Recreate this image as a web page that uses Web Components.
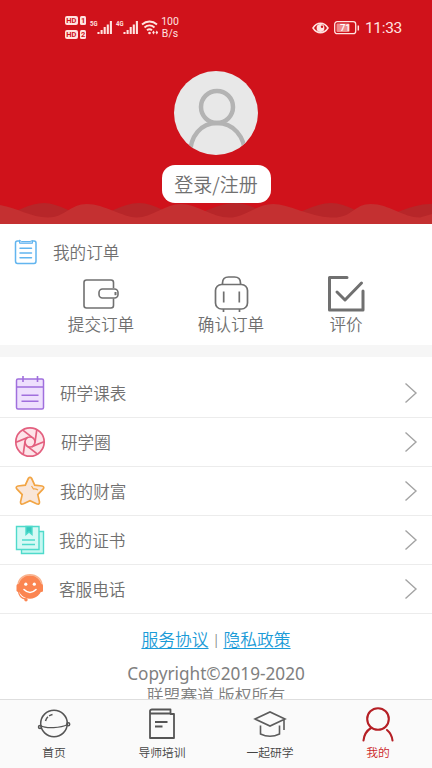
<!DOCTYPE html>
<html lang="zh-CN">
<head>
<meta charset="utf-8">
<title>我的</title>
<style>
html,body{margin:0;height:100%;overflow:hidden;background:#fff}
body{font-family:Roboto,"Noto Sans CJK SC",sans-serif;color:#707070}
</style>
</head>
<body>
<profile-page></profile-page>
<script>
const ICONS = {
  signals: [116,26,`<g fill="#ffe3e0"><rect x="0" y="1" width="13" height="9" rx="2"/><rect x="15" y="1" width="6" height="9" rx="1.5"/><rect x="0" y="15" width="13" height="9" rx="2"/><rect x="15" y="15" width="6" height="9" rx="1.5"/></g>
   <g font-family="Roboto" font-weight="700" font-size="7.5" fill="#d0121b"><text x="1.3" y="8.2">HD</text><text x="1.3" y="22.2">HD</text><text x="16" y="8.2">1</text><text x="16" y="22.2">2</text></g>
   <g font-family="Roboto" font-weight="700" font-size="8" fill="#ffe3e0"><text x="25" y="10.5" textLength="7.5" lengthAdjust="spacingAndGlyphs">5G</text><text x="51" y="10.5" textLength="7.5" lengthAdjust="spacingAndGlyphs">4G</text></g>
   <path d="M33.5 19v-2M36.6 19v-4M39.7 19v-7M42.8 19v-9.500M45.900 19v-13M59.500 19v-2M62.600 19v-4M65.700 19v-7M68.800 19v-9.500M71.900 19v-13" stroke="#ffe3e0" stroke-width="2.100"/>
   <g fill="none" stroke="#ffe3e0" stroke-width="1.900"><path d="M77 9.500c4.500-4 10.500-4 15 0M79.500 12.500c3-2.700 7-2.700 10 0M82 15.300c1.500-1.300 3.500-1.300 5 0"/></g><circle cx="84.500" cy="18" r="1.300" fill="#ffe3e0"/><path d="M87.200 17.500l1.300-2 1.300 2-1.300 2zM90.500 17.500l1.300-2 1.300 2-1.300 2z" fill="#ffe3e0"/>`],
  eye: [17,12,`<path d="M1 6c4-6.300 11-6.300 15 0c-4 6.300-11 6.300-15 0z" fill="none" stroke="#ffe3e0" stroke-width="1.500"/><circle cx="8.500" cy="6" r="3.900" fill="#ffe3e0"/><circle cx="10" cy="4.700" r="1.200" fill="#d0121b"/>`],
  battery: [26,14,`<rect x=".700" y=".700" width="21" height="12" rx="2.500" fill="none" stroke="#ffe3e0" stroke-width="1.300"/><rect x="2.500" y="2.500" width="13" height="8.500" rx="1" fill="#ee8c8c"/><path d="M24.300 4.500v5" stroke="#ffe3e0" stroke-width="1.500"/><text x="11.300" y="10.200" text-anchor="middle" font-family="Roboto" font-size="9.500" font-weight="500" fill="#fff">71</text>`],
  avatar: [84,84,`<defs><clipPath id="c"><circle cx="42" cy="42" r="42"/></clipPath></defs><circle cx="42" cy="42" r="42" fill="#e8e8e8"/><g clip-path="url(#c)" fill="none" stroke="#b3b3b3" stroke-width="4.500"><circle cx="43" cy="36" r="16"/><path d="M16 84C16 65 27 52 43 52S71 65 71 84"/></g>`],
  wave: [432,22,`<path d="M0 14C18 10 29 1 44 1S75 14 91 14 122 1 139 1 168 14 184 14 217 1 235 1 264 14 281 14 314 1 331 1 360 14 378 14 411 1 432 2V22H0Z" fill="#b72629"/>
   <path d="M0 3C18 6 31 15.500 48 15.500S70 2 87 2 123 15.500 137 15.500 166 2 181 2 213 15.500 229 15.500 257 2 273 2 309 14.500 331 15.500 353 2 371 2 403 15.500 420 15.500L432 12V22H0Z" fill="#c43031"/>`],
  list: [24,26,`<g fill="none" stroke="#62b5ef" stroke-width="1.500" stroke-linecap="round" stroke-linejoin="round"><path d="M5 2H3.500Q1.500 2 1.500 4V22Q1.500 24.500 3.500 24.500H20Q22 24.500 22 22V4Q22 2 20 2H18.500"/><path d="M5.500 1.500V4.300H18.500V1.500L16 2.500H8Z" fill="#b9dcfa" stroke-width="1"/><path d="M6 9.200H17.500M6 14H17.500M6 18.700H17.500"/></g>`],
  wallet: [38,32,`<g fill="none" stroke="#707070" stroke-width="1.600"><path d="M31.500 10V4.500Q31.500 2 29 2H4.500Q2 2 2 4.500V27.500Q2 30 4.500 30H29Q31.500 30 31.500 27.500V20.500"/><rect x="17" y="11" width="19" height="9" rx="3.500"/><path d="M33.500 14V17.200" stroke-width="2"/></g>`],
  luggage: [36,38,`<g fill="none" stroke="#707070" stroke-width="1.700"><path d="M9.500 9.500V8Q9.500 2 15.500 2H21.500Q27.500 2 27.500 8V9.500"/><rect x="2.500" y="9.500" width="32" height="24.500" rx="6"/><path d="M10.700 16.500V27.500M26.300 16.500V27.500M10.500 34V37M26.500 34V37"/></g>`],
  check: [38,38,`<path d="M20 2.500H2.500V35H36V16M10 17L18 25L34.500 8" fill="none" stroke="#707070" stroke-width="3" stroke-linecap="round" stroke-linejoin="round"/>`],
  calendar: [30,36,`<rect x="1.500" y="4" width="27" height="30" rx="1.500" fill="#eee0fd" stroke="#a06fdd" stroke-width="1.500"/><path d="M1.500 12H28.500M8 1V7M22.500 1V7M6.500 20.200H23.500M6.500 26.300H23.500" stroke="#a06fdd" stroke-width="1.600"/>`],
  aperture: [32,32,`<g fill="#fde4e9" stroke="#e3607f" stroke-width="1.700"><circle cx="16" cy="16" r="14.200"/><g transform="rotate(38 16 16)">${[0,60,120,180,240,300].map(a=>`<path d="M16 11H3" transform="rotate(${a} 16 16)"/>`).join('')}</g><circle cx="16" cy="16" r="5"/></g>`],
  star: [32,30,`<path d="M14.400 2.300Q16 .300 17.600 2.300L20.700 9.200 28 10Q31 10.800 29 13.200L23.800 18.600 25.500 26Q25.500 29 22.500 27.700L16 24.700 9.500 27.700Q6.500 29 6.500 26L8.200 18.600 3 13.200Q1 10.800 4 10L11.300 9.200Z" fill="#f9e6d9" stroke="#f2a544" stroke-width="1.700"/><path d="M17.500 10L19.500 13Q21.500 12.500 24 14" fill="none" stroke="#f2a544" stroke-width="1.200"/>`],
  certificate: [30,30,`<g fill="#c5f7f1" stroke="#4fdacb" stroke-width="1.400"><path d="M6.500 6.500H28.500V28.500H6.500Z"/><path d="M1.500 1.500H24V24.500H1.500Z" fill="#d6f9f5"/><path d="M11 1.500H17V9.500L14 7 11 9.500Z" fill="#35c9bc"/><path d="M7 15H20M7 19.500H20"/></g>`],
  service: [30,32,`<circle cx="15" cy="14" r="11.800" fill="#fb8551"/><path d="M3 13C3 -2 27 -2 27 13" fill="none" stroke="#f9b28d" stroke-width="1.500"/><rect x="1.500" y="11" width="3.500" height="8" rx="1.700" fill="#fb8551"/><rect x="25" y="11" width="3" height="8" rx="1.500" fill="#fb8551"/><circle cx="10.800" cy="11.200" r="1.600" fill="#fff"/><circle cx="19.300" cy="11.200" r="1.600" fill="#fff"/><path d="M9 16.500Q15 22.500 21 16.500" fill="none" stroke="#fff" stroke-width="1.600" stroke-linecap="round"/><path d="M3.500 18Q4 25 10.500 26" fill="none" stroke="#fb8551" stroke-width="1.300"/><circle cx="11" cy="26.700" r="1.700" fill="#fb8551"/>`],
  chevron: [14,22,`<path d="M1.500 1.500L12 11L1.500 20.500" fill="none" stroke="#a4a4a4" stroke-width="1.400"/>`],
  planet: [34,32,`<g fill="none" stroke="#555" stroke-width="1.500"><circle cx="17" cy="15.500" r="13.300"/><path d="M3.500 17.500C9 21 24 20 30.500 16.500" stroke-width="1.200"/><circle cx="3" cy="19" r="1.500"/><circle cx="31.200" cy="16.300" r="1.500"/><path d="M8.500 13Q9.500 8 15.500 6.500" stroke-dasharray="5 1.500 9"/></g>`],
  book: [28,32,`<g fill="none" stroke="#555" stroke-width="1.800" stroke-linejoin="round"><path d="M2 3Q2 1.500 4 1.500H22.500V6H26V30H2ZM2.500 5.500H22.500M7 14H19.500M7 18.500H14.500"/></g>`],
  cap: [34,28,`<g fill="none" stroke="#5c5c5c" stroke-width="1.600"><path d="M2 9L17 2 32 9 17 16ZM7.500 15.500V24Q17 28.500 26.500 24V15.500M31 9V20"/></g>`],
  user: [34,38,`<g fill="none" stroke="#b51f25" stroke-width="2.100" stroke-linecap="round"><circle cx="17" cy="14" r="10.800"/><path d="M2.500 35.500C3 30 6 25.500 10 23M26 25C29 27.500 31 31 31.500 35.500"/></g>`]
};
function define(name, css, html){
  customElements.define(name, class extends HTMLElement{
    constructor(){super();this.attachShadow({mode:'open'});}
    connectedCallback(){
      this.shadowRoot.innerHTML = `<style>:host{display:block;box-sizing:border-box}${css}</style>` + (typeof html==='function'?html(this):html);
    }
  });
}
define('app-icon',':host{display:block;flex:none}svg{display:block}',el=>{
  const [w,h,body]=ICONS[el.getAttribute('name')];
  return `<svg width="${w}" height="${h}" viewBox="0 0 ${w} ${h}">${body}</svg>`;
});
define('status-bar',`:host{display:flex;height:56px;padding:0 30px 0 65px;align-items:center;color:#ffe3e0;font-weight:400}
.rate{font-size:10.500px;line-height:12px;text-align:center;margin-left:-21px;width:20px}.grow{flex:1}.bat{margin:0 5px 0 5px}.time{font-size:15.500px;letter-spacing:-.3px}`,
`<app-icon name="signals"></app-icon><div class="rate">100<br>B/s</div><div class="grow"></div><app-icon name="eye"></app-icon><app-icon class="bat" name="battery"></app-icon><div class="time">11:33</div>`);
define('profile-header',`:host{height:224px;background:#d0121b;display:grid;grid-template-rows:56px 146px 22px}
.body{display:flex;flex-direction:column;align-items:center;padding-top:15px}
button{position:relative;z-index:1;flex:none;margin:10px 0 0;border:0;border-radius:13px;background:#fff;width:109px;height:38px;padding:0;font:19px/38px "Noto Sans CJK SC",sans-serif;font-weight:350;color:#707070;white-space:nowrap}`,
`<status-bar></status-bar><div class="body"><app-icon name="avatar"></app-icon><button>登录/注册</button></div><app-icon name="wave"></app-icon>`);
define('order-action',`:host{display:flex;flex-direction:column;align-items:center;width:80px;font-size:16.600px;line-height:24px}
.pic{height:40px;display:flex;align-items:center}`,`<div class="pic"><slot name="icon"></slot></div><span><slot></slot></span>`);
define('order-section',`:host{height:121px;background:#fff}
.head{display:flex;align-items:center;height:56px;padding-left:14px;gap:15px;font-size:16.600px}
.row{display:flex;margin:-6px 0 0 61px}.b{margin-left:50px}.c{margin-left:35px}`,
`<div class="head"><app-icon name="list"></app-icon><span>我的订单</span></div>
<div class="row"><order-action><app-icon slot="icon" name="wallet"></app-icon>提交订单</order-action><order-action class="b"><app-icon slot="icon" name="luggage"></app-icon>确认订单</order-action><order-action class="c"><app-icon slot="icon" name="check"></app-icon>评价</order-action></div>`);
define('menu-row',`:host{display:flex;align-items:center;height:49px;border-bottom:1px solid #ececec;padding:0 14px 0 14px;font-size:16.600px}
.pic{width:32px;display:flex;justify-content:center}.label{margin-left:var(--gap,14px);flex:1}`,
el=>`<div class="pic"><app-icon name="${el.getAttribute('icon')}"></app-icon></div><div class="label"><slot></slot></div><app-icon name="chevron"></app-icon>`);
define('menu-list',`:host{border-top:12px solid #f6f6f6;padding-top:12px}`,
`<menu-row icon="calendar">研学课表</menu-row><menu-row icon="aperture" style="--gap:15px">研学圈</menu-row><menu-row icon="star">我的财富</menu-row><menu-row icon="certificate" style="--gap:13px">我的证书</menu-row><menu-row icon="service" style="--gap:13px">客服电话</menu-row>`);
define('legal-footer',`:host{text-align:center;font-size:16.800px;line-height:22px;padding-top:15px;color:#808080;white-space:nowrap}
a{color:#1b9bd7;text-decoration:underline;text-underline-offset:2px}.links{word-spacing:1.500px}.copy{margin-top:12px}.en{font-family:"Noto Sans",sans-serif;font-size:17.200px;font-weight:400}`,
`<div class="links"><a>服务协议</a> | <a>隐私政策</a></div><div class="copy"><span class="en">Copyright©2019-2020</span><br>联盟赛道 版权所有</div>`);
define('tab-item',`:host{display:flex;flex-direction:column;align-items:center;font-size:11.800px;line-height:18px;color:#444}
:host([active]){color:#cc1f28}.pic{height:38px;display:flex;align-items:center;margin:5px 0 1px}`,
el=>`<div class="pic"><app-icon name="${el.getAttribute('icon')}"></app-icon></div><slot></slot>`);
define('tab-bar',`:host{display:grid;grid-template-columns:repeat(4,1fr);height:69px;background:#fafafa;border-top:1px solid #dedede}`,
`<tab-item icon="planet">首页</tab-item><tab-item icon="book">导师培训</tab-item><tab-item icon="cap">一起研学</tab-item><tab-item icon="user" active>我的</tab-item>`);
define('profile-page',`:host{display:grid;grid-template-rows:699px 69px;width:432px;height:768px;font-weight:350}main{overflow:hidden;min-height:0}`,
`<main><profile-header></profile-header><order-section></order-section><menu-list></menu-list><legal-footer></legal-footer></main><tab-bar></tab-bar>`);
</script>
</body>
</html>
